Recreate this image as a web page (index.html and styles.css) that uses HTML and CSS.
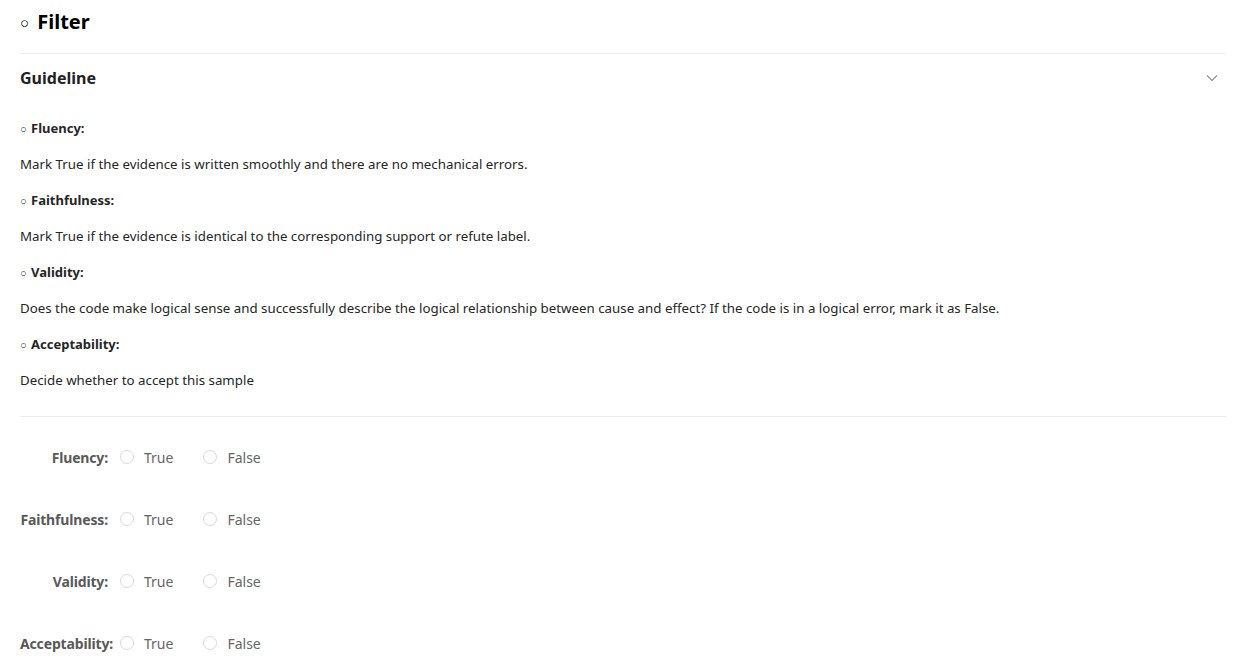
FILE: index.html
```html
<!DOCTYPE html>
<html>
<head>
  <title>Filter</title>
  <link rel="stylesheet" href="styles.css">
</head>
<body>
  <div class="page">
    <h2 class="page-title"><span class="bullet">○</span> Filter</h2>

    <div class="collapse">
      <div class="collapse-header">
        <span>Guideline</span>
        <svg class="chevron" width="12" height="8" viewBox="0 0 12 8">
          <path d="M1 1.5 L6 6.5 L11 1.5" fill="none" stroke="#8c8c8c" stroke-width="1.1"/>
        </svg>
      </div>
      <div class="collapse-body">
        <p class="rule-title"><span class="small-bullet">○</span> <b>Fluency:</b></p>
        <p>Mark True if the evidence is written smoothly and there are no mechanical errors.</p>
        <p class="rule-title"><span class="small-bullet">○</span> <b>Faithfulness:</b></p>
        <p>Mark True if the evidence is identical to the corresponding support or refute label.</p>
        <p class="rule-title"><span class="small-bullet">○</span> <b>Validity:</b></p>
        <p>Does the code make logical sense and successfully describe the logical relationship between cause and effect? If the code is in a logical error, mark it as False.</p>
        <p class="rule-title"><span class="small-bullet">○</span> <b>Acceptability:</b></p>
        <p>Decide whether to accept this sample</p>
      </div>
    </div>

    <form class="label-form">
      <div class="form-row">
        <label class="form-label">Fluency:</label>
        <label class="radio"><input type="radio" name="fluency"><span class="dot"></span>True</label>
        <label class="radio"><input type="radio" name="fluency"><span class="dot"></span>False</label>
      </div>
      <div class="form-row">
        <label class="form-label">Faithfulness:</label>
        <label class="radio"><input type="radio" name="faithfulness"><span class="dot"></span>True</label>
        <label class="radio"><input type="radio" name="faithfulness"><span class="dot"></span>False</label>
      </div>
      <div class="form-row">
        <label class="form-label">Validity:</label>
        <label class="radio"><input type="radio" name="validity"><span class="dot"></span>True</label>
        <label class="radio"><input type="radio" name="validity"><span class="dot"></span>False</label>
      </div>
      <div class="form-row">
        <label class="form-label">Acceptability:</label>
        <label class="radio"><input type="radio" name="acceptability"><span class="dot"></span>True</label>
        <label class="radio"><input type="radio" name="acceptability"><span class="dot"></span>False</label>
      </div>
    </form>
  </div>
</body>
</html>
```

FILE: styles.css
```css
body {
  font-family: "Noto Sans", "Open Sans", sans-serif;
  background-color: #fff;
  color: #262626;
  margin: 0;
}

.page {
  padding: 0 10px 0 20px;
}

.page-title {
  margin: 0;
  padding-bottom: 9px;
  line-height: 44px;
  font-size: 20px;
  font-weight: 700;
  color: #000;
  border-bottom: 1px solid #ebebf0;
}

.bullet {
  font-size: 15px;
  font-weight: 400;
  margin-right: 3px;
  vertical-align: 1px;
}

.collapse {
  border-bottom: 1px solid #ebebf0;
}

.collapse-header {
  display: flex;
  justify-content: space-between;
  align-items: center;
  height: 48px;
  font-size: 16px;
  font-weight: 700;
  color: #222;
}

.chevron {
  margin-right: 8px;
}

.collapse-body {
  padding: 8px 0 18px;
}

.collapse-body p {
  margin: 0;
  height: 36px;
  line-height: 36px;
  font-size: 13.3px;
  color: #262626;
}

.collapse-body .rule-title {
  font-size: 13px;
}

.small-bullet {
  font-size: 11px;
  margin-right: 1px;
}

.label-form {
  padding-top: 24px;
}

.form-row {
  display: flex;
  align-items: center;
  height: 32px;
  margin-bottom: 30px;
  font-size: 14px;
}

.form-label {
  width: 88px;
  margin-right: 12px;
  text-align: right;
  white-space: nowrap;
  font-weight: 700;
  color: #595959;
  letter-spacing: -0.15px;
}

.radio {
  display: inline-flex;
  align-items: center;
  margin-right: 30px;
  color: #666;
  cursor: pointer;
}

.radio input {
  display: none;
}

.dot {
  width: 12px;
  height: 12px;
  border: 1px solid #d9d9de;
  border-radius: 50%;
  margin-right: 10px;
}
```
